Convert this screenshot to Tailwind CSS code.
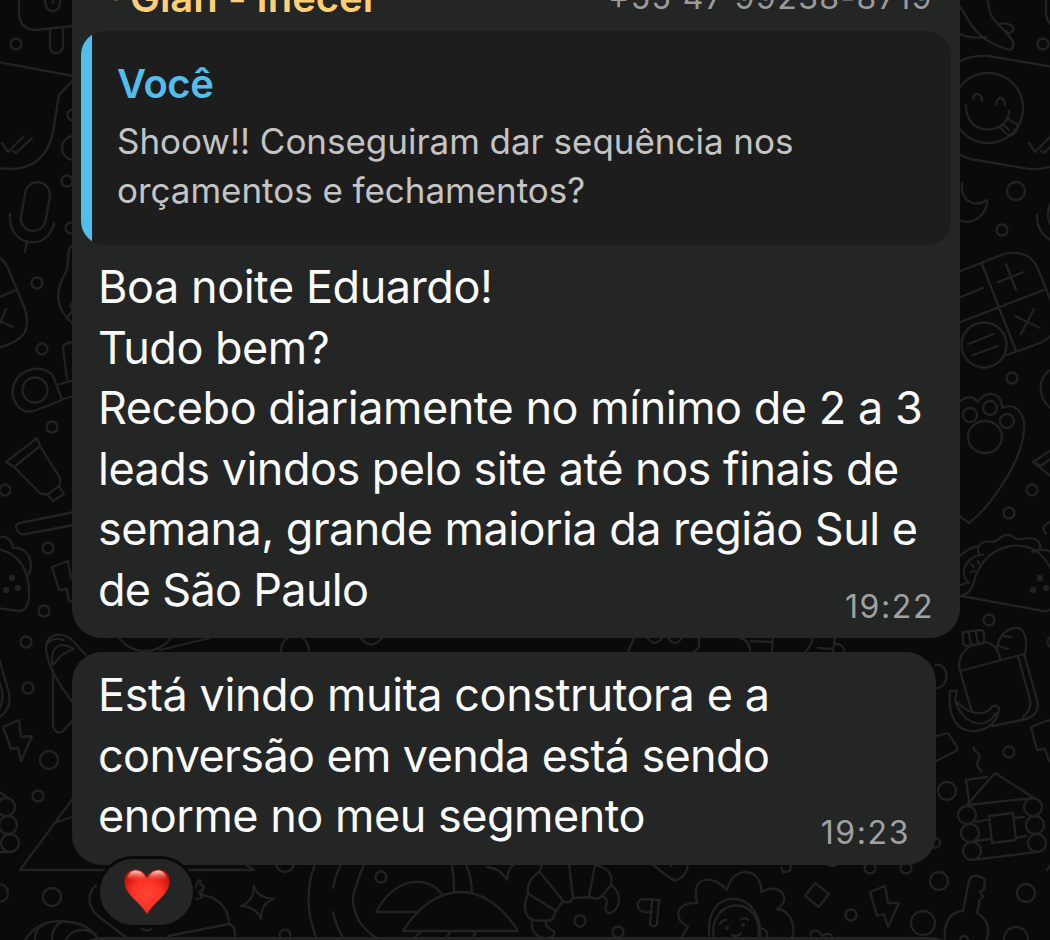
<!DOCTYPE html>
<html lang="pt-BR">
<head>
    <meta charset="UTF-8">
    <meta name="viewport" content="width=device-width, initial-scale=1.0">
    <title>Conversa</title>
    <script src="https://cdn.jsdelivr.net/npm/@tailwindcss/browser@4"></script>
</head>
<body class="bg-[#0a0a0a] font-['Inter','Liberation_Sans',sans-serif]">
<div class="relative w-[1050px] h-[940px] overflow-hidden">

    <!-- Doodle wallpaper -->
    <svg class="absolute inset-0" width="1050" height="940" viewBox="0 0 1050 940" fill="none" stroke="#212222" stroke-width="2.3" stroke-linecap="round" stroke-linejoin="round">
        <!-- left column -->
        <path d="M19 -5V15Q21 30 36 30L74 26M50 30V46Q50 53 56 53T63 46V29M45 -5V2Q46 11 53 11T60 2V-5M53 -5V3"/>
        <path d="M-2 62L73 76M73 80L59 95L53 132Q45 169 10 169L-2 168M2 143L8 152L24 136M13 151L16 153L32 138"/>
        <circle cx="16" cy="44" r="5.5"/><circle cx="73" cy="115" r="5.5"/><circle cx="74" cy="148" r="12"/><circle cx="67" cy="181" r="5.5"/><circle cx="71" cy="228" r="5.5"/>
        <rect x="23" y="182" width="25" height="49" rx="12.5" transform="rotate(10 35 206)"/>
        <path d="M10 214C8 248 48 252 54 223M27 241L25 252"/>
        <path d="M-3 256Q6 261 10 273L25 309C31 330 25 341 -3 348M-3 298L16 290M6 309L-3 330M2 322L13 327"/>
        <circle cx="37" cy="283" r="5.5"/><circle cx="42" cy="349" r="5.5"/><circle cx="52" cy="427" r="5.5"/><circle cx="5" cy="490" r="5.5"/><circle cx="48" cy="548" r="5.5"/><circle cx="44" cy="611" r="5.5"/>
        <path d="M74 243L69 249L67 270C55 290 54 307 72 323M75 300L70 306L73 310L67 318"/>
        <path d="M67 379L63 348Q63 343 73 342M57 385L74 380M63 399L74 396M62 400L34 411C19 415 9 398 14 384C20 367 45 364 53 376Z"/><circle cx="35" cy="390" r="12.5"/>
        <path d="M6 462L37 438L40 446L60 478Q61 482 59 486L48 494Q43 495 40 493L14 467ZM14 467L40 446M59 486L64 494L53 501L47 494"/>
        <path d="M74 512L20 523Q14 524 17 530T26 534L74 525"/>
        <path d="M-2 538C5 534 12 540 13 548C28 547 34 561 29 574M-2 549C20 554 30 570 29 597C28 607 25 611 18 611L-2 608"/>
        <g fill="#212222"><circle cx="12" cy="578" r="2"/><circle cx="6" cy="590" r="2"/><circle cx="18" cy="588" r="2"/></g>
        <path d="M74 580L71 578L68 561L52 567L59 590L67 589L69 601L74 602"/>
        <circle cx="26" cy="642" r="5.5"/><circle cx="28" cy="688" r="5.5"/><circle cx="49" cy="760" r="9"/><circle cx="38" cy="796" r="5.5"/>
        <path d="M-2 655L9 693Q12 710 -2 718M-2 679Q7 698 -2 711"/>
        <path d="M86 655L72 640C60 630 45 635 46 649C48 668 60 686 74 704M47 644C52 637 59 639 64 640M52 664C51 645 60 641 74 649C63 653 61 655 54 664ZM53 670V726Q55 734 62 732L74 719"/>
        <path d="M3 727L19 720L21 737L32 736L21 761L18 748L11 749Z"/>
        <path d="M-2 791L8 798M-2 852H12"/><circle cx="6" cy="807" r="9"/><circle cx="8" cy="825" r="9"/><circle cx="10" cy="843" r="9"/>
        <path d="M74 797L20 870H254L242 862M55 823L74 816"/>
        <!-- between the bubbles -->
        <path d="M118 636C130 656 160 656 172 636M160 650L210 638"/><path d="M281 652C281 630 309 630 309 652"/><path d="M361 638Q371 651 382 638"/><path d="M628 652L634 638M646 636Q655 650 663 636M667 636Q675 650 683 636M699 638V646Q699 649 694 652"/><path d="M740 638Q750 640 750 652M772 652L773 636M751 641L772 642M805 652Q812 645 813 637M833 652L835 637M818 648L832 649M834 644Q843 643 845 652"/>
        <!-- lower strip -->
        <circle cx="-1" cy="893" r="9"/><circle cx="52" cy="897" r="9"/><circle cx="285" cy="863" r="9"/><circle cx="381" cy="877" r="5.5"/><circle cx="285" cy="935" r="5.5"/>
        <path d="M25 940C38 920 57 920 69 922C82 923 91 929 97 937M35 940C35 931 40 925 48 923M52 940C52 930 57 922 65 921M66 940C70 930 82 928 92 932"/>
        <path d="M96 885C86 895 88 907 98 916L127 938M141 928Q146 933 152 928M195 890C198 876 202 879 200 885C206 884 204 890 199 892C206 894 202 899 196 899M200 895C219 896 229 910 229 924L168 936L170 941M229 924Q236 925 235 940"/>
        <path d="M254 886Q257 898 274 899Q261 903 261 919Q257 907 241 906Q254 901 254 886Z"/>
        <path d="M315 864Q301 900 317 940M341 864Q335 877 333 888M364 864Q354 890 353 898Q353 925 380 940M333 912Q336 926 344 940"/>
        <path d="M418 912H376C396 876 427 875 442 894M452 864Q454 878 454 891M466 864Q472 879 472 892M403 931C435 880 485 878 518 931ZM422 931L414 938M451 931L446 938M476 931L473 938"/>
        <path d="M487 867Q500 868 507 880Q508 867 515 864"/>
        <path d="M542 864L540 871C529 878 527 886 528 894C523 905 524 912 529 918C535 921 545 921 552 920L556 911L563 901Q570 905 573 898L591 897Q598 901 602 896L611 885C613 873 608 868 595 865M540 872L563 901M569 864L573 898M595 866L589 896M529 894L556 911M532 919C530 934 540 941 552 937C560 928 544 931 546 922M611 885C622 893 620 904 615 910C610 916 604 912 606 906C608 898 606 899 603 897"/>
        <circle cx="580" cy="921" r="5.5"/><circle cx="618" cy="932" r="5.5"/>
        <path d="M653 865L670 878Q676 883 683 876Q690 868 686 862M671 864V866"/>
        <path d="M659 900L657 924Q654 929 650 924L652 901M652 912H645C635 911 636 899 644 899L660 900"/>
        <path d="M680 940L688 927C673 920 675 902 697 903C690 875 713 874 727 890C733 864 763 868 761 892C780 881 793 900 777 909C791 910 797 928 791 940M710 940C700 885 765 885 760 940M714 940C706 895 766 893 758 940M760 928C769 930 769 937 763 940M720 924Q722 920 726 920M741 919Q746 917 748 920M732 935Q737 938 741 933"/>
        <circle cx="727" cy="928" r="1"/><circle cx="743" cy="925" r="1"/>
        <path d="M815 883L829 894L819 907L805 896ZM781 867L783 872L790 871L791 864M827 864Q832 868 838 864M811 938C808 929 819 928 822 936Q831 930 833 940"/>
        <circle cx="870" cy="868" r="5.5"/><circle cx="906" cy="868" r="5.5"/><circle cx="851" cy="915" r="5.5"/><circle cx="939" cy="881" r="9"/><circle cx="923" cy="923" r="12"/><circle cx="1026" cy="893" r="9"/><circle cx="1016" cy="939" r="12"/>
        <path d="M870 892L885 886L888 903L899 903L888 927L884 914L877 916Z"/>
        <path d="M963 911L969 881Q971 875 977 876T985 880L984 889L980 892L983 897L979 901V906L977 913C989 920 991 932 985 942M963 911C949 912 943 924 945 942"/><circle cx="964" cy="940" r="4"/>
        <!-- right column -->
        <path d="M957 2L966 16C975 33 987 44 1010 50C1016 47 1013 39 1007 34C998 22 988 20 988 -3M960 34Q970 39 986 37M998 24C1005 22 1013 25 1013 28C1015 31 1008 36 1006 31M1046 -2V15Q1047 22 1053 26"/>
        <circle cx="1043" cy="44" r="5.5"/><path d="M958 63Q968 55 988 56L1053 67M958 154L970 159L1023 168Q1036 171 1053 166"/>
        <circle cx="988" cy="108" r="35"/><path d="M973 99C974 91 982 93 982 101M996 104C998 94 1005 98 1005 105M966 105C965 138 1009 135 1009 111M999 127L1007 134Q1011 138 1016 131T1012 122L1008 118M1003 124L1009 130M1029 143L1035 152L1051 136M1041 151L1044 153L1053 144"/>
        <circle cx="1016" cy="191" r="9"/><circle cx="1002" cy="230" r="5.5"/>
        <path d="M962 183V191C966 205 978 206 987 200C988 207 981 222 966 222L958 220M1037 215Q1037 233 1051 240M1052 200Q1045 214 1050 224"/>
        <path d="M958 272L1004 254C1021 249 1034 258 1038 269L1053 306M1053 332Q1050 338 1040 343L1004 356M958 323L1044 290M982 264L1016 351M958 298L983 288M998 282L1024 272M1006 264L1016 290M1015 316L1040 328M1034 309L1021 334"/>
        <circle cx="984" cy="345" r="22.5"/><path d="M968 344L994 334M973 355L998 346"/>
        <circle cx="1012" cy="378" r="5.5"/><path d="M1053 368C1036 377 1037 399 1053 410M1053 449L1033 462L1053 478M1033 462L1041 466L1053 457"/>
        <path d="M958 403Q970 392 978 402C984 390 1003 391 1002 408C1017 401 1026 417 1024 430C1022 462 990 507 969 523L958 515"/>
        <circle cx="970" cy="415" r="7"/><circle cx="990" cy="408" r="7"/><circle cx="1007" cy="421" r="7"/><ellipse cx="985" cy="437" rx="17" ry="16"/>
        <circle cx="1032" cy="490" r="5.5"/><circle cx="1009" cy="513" r="5.5"/>
        <path d="M1053 521Q1039 525 1046 534M979 554C975 543 985 540 993 542C1001 541 1000 532 1012 536C1020 544 1025 535 1035 539Q1041 543 1040 548M961 596C975 590 971 586 977 573C990 543 1023 540 1039 553Q1050 563 1053 575M961 596L1043 611Q1050 612 1053 606M960 556Q968 548 979 546M1032 552Q1044 547 1053 553M983 555C968 554 957 572 969 583M961 585L969 582M971 564L974 567M971 572L975 571M978 561L979 564"/>
        <g fill="#212222"><circle cx="1040" cy="578" r="2"/><circle cx="1033" cy="590" r="2"/><circle cx="1046" cy="588" r="2"/></g>
        <circle cx="989" cy="620" r="5.5"/><circle cx="1053" cy="642" r="5.5"/>
        <path d="M963 635Q961 632 965 632L980 630Q984 630 984 635V639Q985 643 980 644L967 646Q963 646 963 642ZM969 634L971 644M976 633L978 643M969 647C961 653 957 660 960 671L972 712M985 642C994 644 998 648 1000 659M960 671L1024 654L1037 700C1040 713 1032 718 1022 720L992 726M997 649C998 635 1008 627 1019 628C1027 632 1027 645 1025 654M1018 656L1030 700Q1032 710 1023 717M1003 636L1011 637M999 646L1008 649"/>
        <path d="M950 691H957L955 700C968 714 983 718 992 707Q996 704 999 708C997 730 974 735 961 728C949 718 949 704 950 691ZM955 700C961 722 984 733 996 713"/>
        <path d="M936 665C950 663 950 688 936 688M936 736L948 733L957 747Q958 751 954 752L936 761M974 747Q973 750 979 754Q981 757 977 763Q977 767 982 772M1053 720L1046 721L1031 727L1037 750L1045 749L1049 761"/>
        <circle cx="1009" cy="752" r="5.5"/><circle cx="947" cy="791" r="9"/><circle cx="935" cy="843" r="5"/>
        <path d="M969 801L966 780L987 777M967 805L995 773L1034 798ZM976 822L990 819M976 841L990 839M1013 818L1024 817M1016 838L1026 836M973 860L1037 852M989 816L1013 813L1016 840L992 843Z"/>
        <circle cx="967" cy="815" r="9"/><circle cx="1033" cy="807" r="9"/><circle cx="970" cy="833" r="9"/><circle cx="1035" cy="825" r="9"/><circle cx="972" cy="851" r="9"/><circle cx="1037" cy="843" r="9"/>
        <path d="M1047 870L1053 862"/>
    </svg>

    <main class="relative flex flex-col items-start pl-[72px]">
        <!-- First message, cut off by the top of the window -->
        <article class="w-[888px] h-[698px] -mt-[60px] rounded-[30px] bg-[#242626] px-[9px] pt-[28px]">
            <header class="flex justify-between h-[63px] pl-[17px] pr-[18px] leading-[60px] whitespace-nowrap">
                <span class="text-[40px] font-semibold text-[#ffcf76]"><span class="relative -top-[4px] mr-[5px]">~</span>Gian <span class="relative top-[3px]">-</span> Inecer</span>
                <span class="text-[32px] text-[#9a9b9b] tracking-[1.4px]">+55 47 99238-8719</span>
            </header>
            <blockquote class="h-[214px] rounded-[24px] overflow-hidden bg-[#1d1d1d] flex">
                <div class="w-[11px] bg-[#53bdeb]"></div>
                <div class="pl-[25px] pt-[28px] whitespace-nowrap">
                    <p class="text-[40px] leading-[50px] font-semibold tracking-[-0.4px] text-[#53bdeb]">Você</p>
                    <p class="mt-[7.5px] text-[35px] leading-[49.5px] tracking-[-0.03px] text-[#c4c4c4]">Shoow!! Conseguiram dar sequência nos<br>orçamentos e fechamentos?</p>
                </div>
            </blockquote>
            <div class="relative pl-[17px] pt-[12.4px] text-[45px] leading-[60.5px] text-[#fafafa] whitespace-nowrap">
                <p class="tracking-[-0.45px]">Boa noite Eduardo!</p>
                <p class="tracking-[-0.5px]">Tudo bem?</p>
                <p class="tracking-[-0.48px]">Recebo diariamente no mínimo de 2 a 3</p>
                <p class="tracking-[-0.52px]">leads vindos pelo site até nos finais de</p>
                <p class="tracking-[-0.56px]">semana, grande maioria da região Sul e</p>
                <p class="tracking-[-0.7px]">de São Paulo</p>
                <time class="absolute right-[17px] -bottom-[7px] text-[32px] leading-[40px] tracking-[1.6px] text-[#a0a1a1]">19:22</time>
            </div>
        </article>

        <!-- Second message with its reaction -->
        <article class="relative mt-[14px] w-[864px] h-[213px] rounded-[30px] bg-[#242626] pl-[26px] pt-[13px] text-[45px] leading-[60.5px] text-[#fafafa] whitespace-nowrap">
            <p class="tracking-[-0.42px]">Está vindo muita construtora e a</p>
            <p class="tracking-[-0.64px]">conversão em venda está sendo</p>
            <p class="tracking-[-0.5px]">enorme no meu segmento</p>
            <time class="absolute right-[26px] bottom-[12px] text-[32px] leading-[40px] tracking-[1.6px] text-[#a0a1a1]">19:23</time>
            <div class="absolute left-[25px] top-[204px] w-[99px] h-[72px] rounded-full border-3 border-[#0a0a0a] bg-[#242626] flex items-center justify-center">
                <svg width="46" height="46" viewBox="0 0 46 46">
                    <defs>
                        <radialGradient id="heart" cx=".5" cy=".55" r=".6">
                            <stop offset="0" stop-color="#ff4436"/><stop offset=".55" stop-color="#fb3125"/><stop offset="1" stop-color="#c31008"/>
                        </radialGradient>
                        <linearGradient id="shine" x2="0" y2="1">
                            <stop offset="0" stop-color="#fff3e4" stop-opacity=".95"/><stop offset="1" stop-color="#ff6a50" stop-opacity="0"/>
                        </linearGradient>
                    </defs>
                    <path fill="url(#heart)" d="M23 45.5C21 41 16 36 10 30C4 24 .5 19 .5 12C.5 5 5 .5 11.500 .5C17 .5 21 4 23 9C25 4 29 .5 34.500 .5C41 .5 45.500 5 45.500 12C45.500 19 42 24 36 30C30 36 25 41 23 45.500Z"/>
                    <path fill="url(#shine)" d="M3 10C4 4 8 1.500 12 1.500C17 1.500 20 5 21.500 10Q12 13 3 10ZM24.500 10C26 5 29 1.500 34 1.500C38 1.500 42 4 43 10Q34 13 24.500 10Z"/>
                </svg>
            </div>
        </article>

        <!-- Next message, just entering the window -->
        <div class="mt-[72px] w-[888px] h-[60px] rounded-[30px] bg-[#242626]"></div>
    </main>
</div>
</body>
</html>
